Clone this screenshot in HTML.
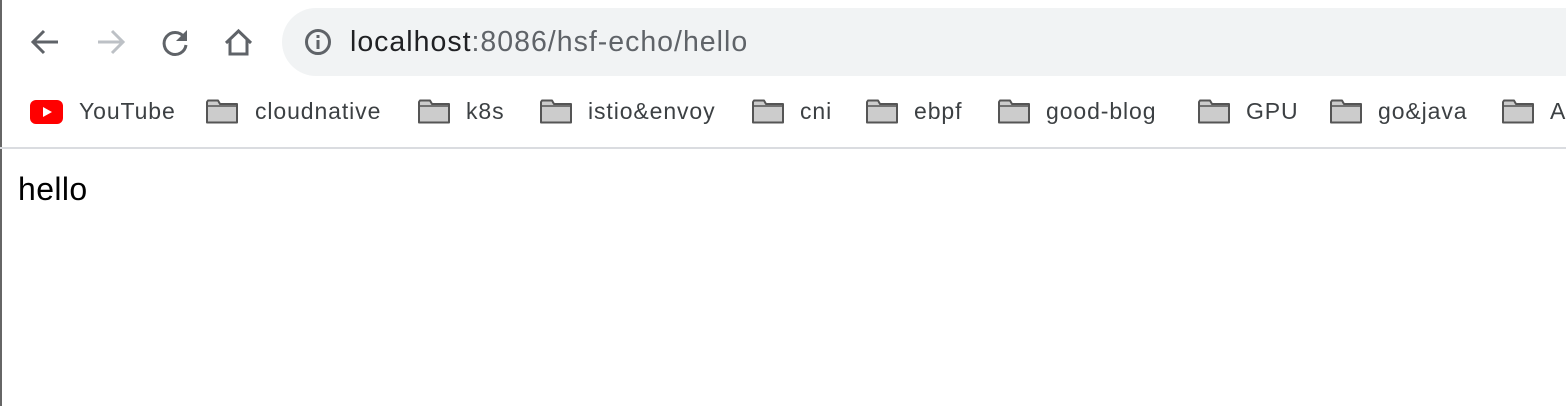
<!DOCTYPE html>
<html><head><meta charset="utf-8"><style>
body{margin:0;width:1566px;height:406px;background:#fff;position:relative;overflow:hidden;font-family:"Liberation Sans",sans-serif}
.a{position:absolute}
.bm{position:absolute;top:96px;font-size:23px;color:#3c4043;line-height:30px;letter-spacing:0.9px}
.f{position:absolute;top:99px;width:32px;height:25px}
</style></head><body>
<div class="a" style="left:0;top:0;width:2px;height:406px;background:#666"></div>
<svg class="a" style="left:28px;top:26px" width="36" height="32" viewBox="0 0 36 32"><path d="M30 16H6M16 5L5 16l11 11" fill="none" stroke="#5f6368" stroke-width="3"/></svg>
<svg class="a" style="left:92px;top:26px" width="36" height="32" viewBox="0 0 36 32"><path d="M6 16h24M20 5l11 11-11 11" fill="none" stroke="#bdc1c6" stroke-width="3"/></svg>
<svg class="a" style="left:158px;top:26px" width="34" height="34" viewBox="0 0 34 34"><path d="M26 11A11 11 0 1 0 28 19" fill="none" stroke="#5f6368" stroke-width="3"/><path d="M29 4v11H18z" fill="#5f6368"/></svg>
<svg class="a" style="left:222px;top:26px" width="34" height="34" viewBox="0 0 34 34"><path d="M4 17L16.5 5 29 17M8 14v14h17V14" fill="none" stroke="#5f6368" stroke-width="3" stroke-linejoin="miter"/></svg>
<div class="a" style="left:282px;top:8px;width:1320px;height:68px;border-radius:34px;background:#f1f3f4"></div>
<svg class="a" style="left:304px;top:28px" width="28" height="28" viewBox="0 0 28 28"><circle cx="14" cy="14" r="11.5" fill="none" stroke="#5f6368" stroke-width="3"/><rect x="12.5" y="12" width="3" height="9" fill="#5f6368"/><rect x="12.5" y="7" width="3" height="3" fill="#5f6368"/></svg>
<div class="a" style="left:350px;top:25px;font-size:28.5px;line-height:34px;color:#202124;letter-spacing:1px">localhost<span style="color:#5f6368">:8086/hsf-echo/hello</span></div>
<svg class="a" style="left:30px;top:100px" width="33" height="24" viewBox="0 0 33 24"><rect x="0" y="0" width="33" height="24" rx="6" fill="#f00"/><path d="M13 7v10l9-5z" fill="#fff"/></svg>
<div class="bm" style="left:79px">YouTube</div>
<svg class="f" style="left:206px" viewBox="0 0 32 25"><path d="M1 3V23.5H31V5H14L12 1.5H2Z" fill="#ccc" stroke="#555" stroke-width="2" stroke-linejoin="round"/><path d="M1 7H31" stroke="#555" stroke-width="1.5"/></svg>
<div class="bm" style="left:255px">cloudnative</div>
<svg class="f" style="left:418px" viewBox="0 0 32 25"><path d="M1 3V23.5H31V5H14L12 1.5H2Z" fill="#ccc" stroke="#555" stroke-width="2" stroke-linejoin="round"/><path d="M1 7H31" stroke="#555" stroke-width="1.5"/></svg>
<div class="bm" style="left:466px">k8s</div>
<svg class="f" style="left:540px" viewBox="0 0 32 25"><path d="M1 3V23.5H31V5H14L12 1.5H2Z" fill="#ccc" stroke="#555" stroke-width="2" stroke-linejoin="round"/><path d="M1 7H31" stroke="#555" stroke-width="1.5"/></svg>
<div class="bm" style="left:588px">istio&amp;envoy</div>
<svg class="f" style="left:752px" viewBox="0 0 32 25"><path d="M1 3V23.5H31V5H14L12 1.5H2Z" fill="#ccc" stroke="#555" stroke-width="2" stroke-linejoin="round"/><path d="M1 7H31" stroke="#555" stroke-width="1.5"/></svg>
<div class="bm" style="left:800px">cni</div>
<svg class="f" style="left:866px" viewBox="0 0 32 25"><path d="M1 3V23.5H31V5H14L12 1.5H2Z" fill="#ccc" stroke="#555" stroke-width="2" stroke-linejoin="round"/><path d="M1 7H31" stroke="#555" stroke-width="1.5"/></svg>
<div class="bm" style="left:914px">ebpf</div>
<svg class="f" style="left:998px" viewBox="0 0 32 25"><path d="M1 3V23.5H31V5H14L12 1.5H2Z" fill="#ccc" stroke="#555" stroke-width="2" stroke-linejoin="round"/><path d="M1 7H31" stroke="#555" stroke-width="1.5"/></svg>
<div class="bm" style="left:1046px">good-blog</div>
<svg class="f" style="left:1198px" viewBox="0 0 32 25"><path d="M1 3V23.5H31V5H14L12 1.5H2Z" fill="#ccc" stroke="#555" stroke-width="2" stroke-linejoin="round"/><path d="M1 7H31" stroke="#555" stroke-width="1.5"/></svg>
<div class="bm" style="left:1246px">GPU</div>
<svg class="f" style="left:1330px" viewBox="0 0 32 25"><path d="M1 3V23.5H31V5H14L12 1.5H2Z" fill="#ccc" stroke="#555" stroke-width="2" stroke-linejoin="round"/><path d="M1 7H31" stroke="#555" stroke-width="1.5"/></svg>
<div class="bm" style="left:1378px">go&amp;java</div>
<svg class="f" style="left:1502px" viewBox="0 0 32 25"><path d="M1 3V23.5H31V5H14L12 1.5H2Z" fill="#ccc" stroke="#555" stroke-width="2" stroke-linejoin="round"/><path d="M1 7H31" stroke="#555" stroke-width="1.5"/></svg>
<div class="bm" style="left:1550px">A</div>
<div class="a" style="left:0;top:147px;width:1566px;height:2px;background:#dadce0"></div>
<div class="a" style="left:18px;top:170px;font-size:32px;line-height:38px;color:#000;letter-spacing:0.4px">hello</div>
</body></html>
